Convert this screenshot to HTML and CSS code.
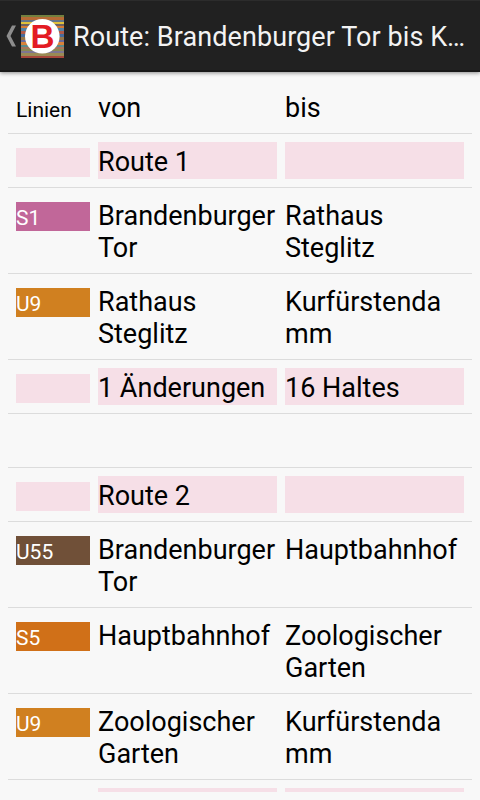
FILE: index.html
```html
<!DOCTYPE html>
<html lang="de">
<head>
    <meta charset="utf-8" />
    <title>Route</title>
    <link rel="stylesheet" href="styles.css">
</head>

<body>
    <header class="bar">
        <svg class="back" width="10" height="22" viewBox="0 0 10 22">
            <path d="M6 0.5H10L4.5 11L10 21.5H6L0.5 11Z" fill="#8d8d8d" />
        </svg>
        <svg class="logo" width="43" height="43" viewBox="0 0 43 43">
            <rect width="43" height="43" fill="#8b7468" />
            <rect width="43" height="2" fill="#72803e" />
            <rect y="2" width="43" height="3" fill="#b66a35" />
            <rect y="5" width="43" height="2" fill="#64758b" />
            <rect y="7" width="43" height="2" fill="#e0c13a" />
            <rect y="9" width="43" height="2" fill="#6f6262" />
            <rect y="11" width="43" height="2" fill="#d57b35" />
            <rect y="13" width="43" height="3" fill="#5182a5" />
            <rect y="16" width="43" height="3" fill="#b15b4a" />
            <rect y="19" width="43" height="3" fill="#476c9e" />
            <rect y="22" width="43" height="3" fill="#96764b" />
            <rect y="25" width="43" height="2" fill="#6c6a99" />
            <rect y="27" width="43" height="3" fill="#d9823b" />
            <rect y="30" width="43" height="2" fill="#5e8b8a" />
            <rect y="32" width="43" height="2" fill="#a9755c" />
            <rect y="34" width="43" height="2" fill="#8a8a54" />
            <rect y="36" width="43" height="2" fill="#7f7692" />
            <rect y="38" width="43" height="3" fill="#9a8b55" />
            <rect y="41" width="43" height="2" fill="#a7473b" />
            <circle cx="21.3" cy="21.3" r="17.3" fill="#fff" />
            <text class="logo-text" x="21.5" y="33" text-anchor="middle" textLength="24" lengthAdjust="spacingAndGlyphs">B</text>
        </svg>
        <h1 class="title">Route: Brandenburger Tor bis Kurfürstendamm</h1>
    </header>

    <main class="list">
        <div class="row">
            <div class="line">Linien</div>
            <div class="stop">von</div>
            <div class="stop">bis</div>
        </div>

        <div class="row info">
            <div class="line"></div>
            <div class="stop">Route 1</div>
            <div class="stop"></div>
        </div>
        <div class="row">
            <div class="line s1">S1</div>
            <div class="stop">Brandenburger Tor</div>
            <div class="stop">Rathaus Steglitz</div>
        </div>
        <div class="row">
            <div class="line u9">U9</div>
            <div class="stop">Rathaus Steglitz</div>
            <div class="stop">Kurfürstendamm</div>
        </div>
        <div class="row info">
            <div class="line"></div>
            <div class="stop">1 Änderungen</div>
            <div class="stop">16 Haltes</div>
        </div>

        <div class="row">
            <div class="line"></div>
            <div class="stop"></div>
            <div class="stop"></div>
        </div>

        <div class="row info">
            <div class="line"></div>
            <div class="stop">Route 2</div>
            <div class="stop"></div>
        </div>
        <div class="row">
            <div class="line u55">U55</div>
            <div class="stop">Brandenburger Tor</div>
            <div class="stop">Hauptbahnhof</div>
        </div>
        <div class="row">
            <div class="line s5">S5</div>
            <div class="stop">Hauptbahnhof</div>
            <div class="stop">Zoologischer Garten</div>
        </div>
        <div class="row">
            <div class="line u9">U9</div>
            <div class="stop">Zoologischer Garten</div>
            <div class="stop">Kurfürstendamm</div>
        </div>
        <div class="row info">
            <div class="line"></div>
            <div class="stop"></div>
            <div class="stop"></div>
        </div>
    </main>
</body>
</html>
```

FILE: styles.css
```css
* {
    box-sizing: border-box;
}

body {
    margin: 0;
    height: 800px;
    display: flex;
    flex-direction: column;
    overflow: hidden;
    background: #f8f8f8;
    color: #000;
    font-family: Roboto, "Liberation Sans", sans-serif;
    font-size: 27px;
}

.bar {
    flex: none;
    height: 72px;
    display: flex;
    align-items: center;
    padding: 1px 13px 0 6px;
    background: #212121;
    border-top: 1px solid #2c2c2c;
    border-bottom: 2px solid #191919;
    box-shadow: 0 1px 4px rgba(0, 0, 0, 0.45);
}

.back {
    flex: none;
    margin-right: 5px;
}

.logo {
    flex: none;
    margin-right: 9px;
}

.logo-text {
    font-family: "Liberation Sans", sans-serif;
    font-weight: bold;
    font-size: 33px;
    fill: #e31b23;
}

.title {
    margin: 0;
    padding-top: 1px;
    min-width: 0;
    flex: 1;
    color: #f3f3f3;
    font-size: 27px;
    font-weight: normal;
    line-height: 32px;
    letter-spacing: 0.08px;
    white-space: nowrap;
    overflow: hidden;
    text-overflow: ellipsis;
}

.list {
    flex: 1;
    min-height: 0;
    margin: 8px;
    overflow: hidden;
}

.row {
    display: grid;
    grid-template-columns: 74px 179px 179px;
    column-gap: 8px;
    align-items: start;
    padding: 8px;
    border-bottom: 1px solid #dcdcdc;
}

.line {
    height: 29px;
    margin-top: 6px;
    padding-top: 4px;
    font-size: 21px;
    line-height: 25px;
}

.stop {
    min-height: 37px;
    padding: 4px 0 1px;
    line-height: 32px;
    word-break: break-word;
}

.info .line,
.info .stop {
    background: #f6dfe7;
}

.s1,
.s5,
.u9,
.u55 {
    color: #fff;
}

.s1 {
    background: #c16799;
}

.s5 {
    background: #d07018;
}

.u9 {
    background: #d08020;
}

.u55 {
    background: #705038;
}
```
